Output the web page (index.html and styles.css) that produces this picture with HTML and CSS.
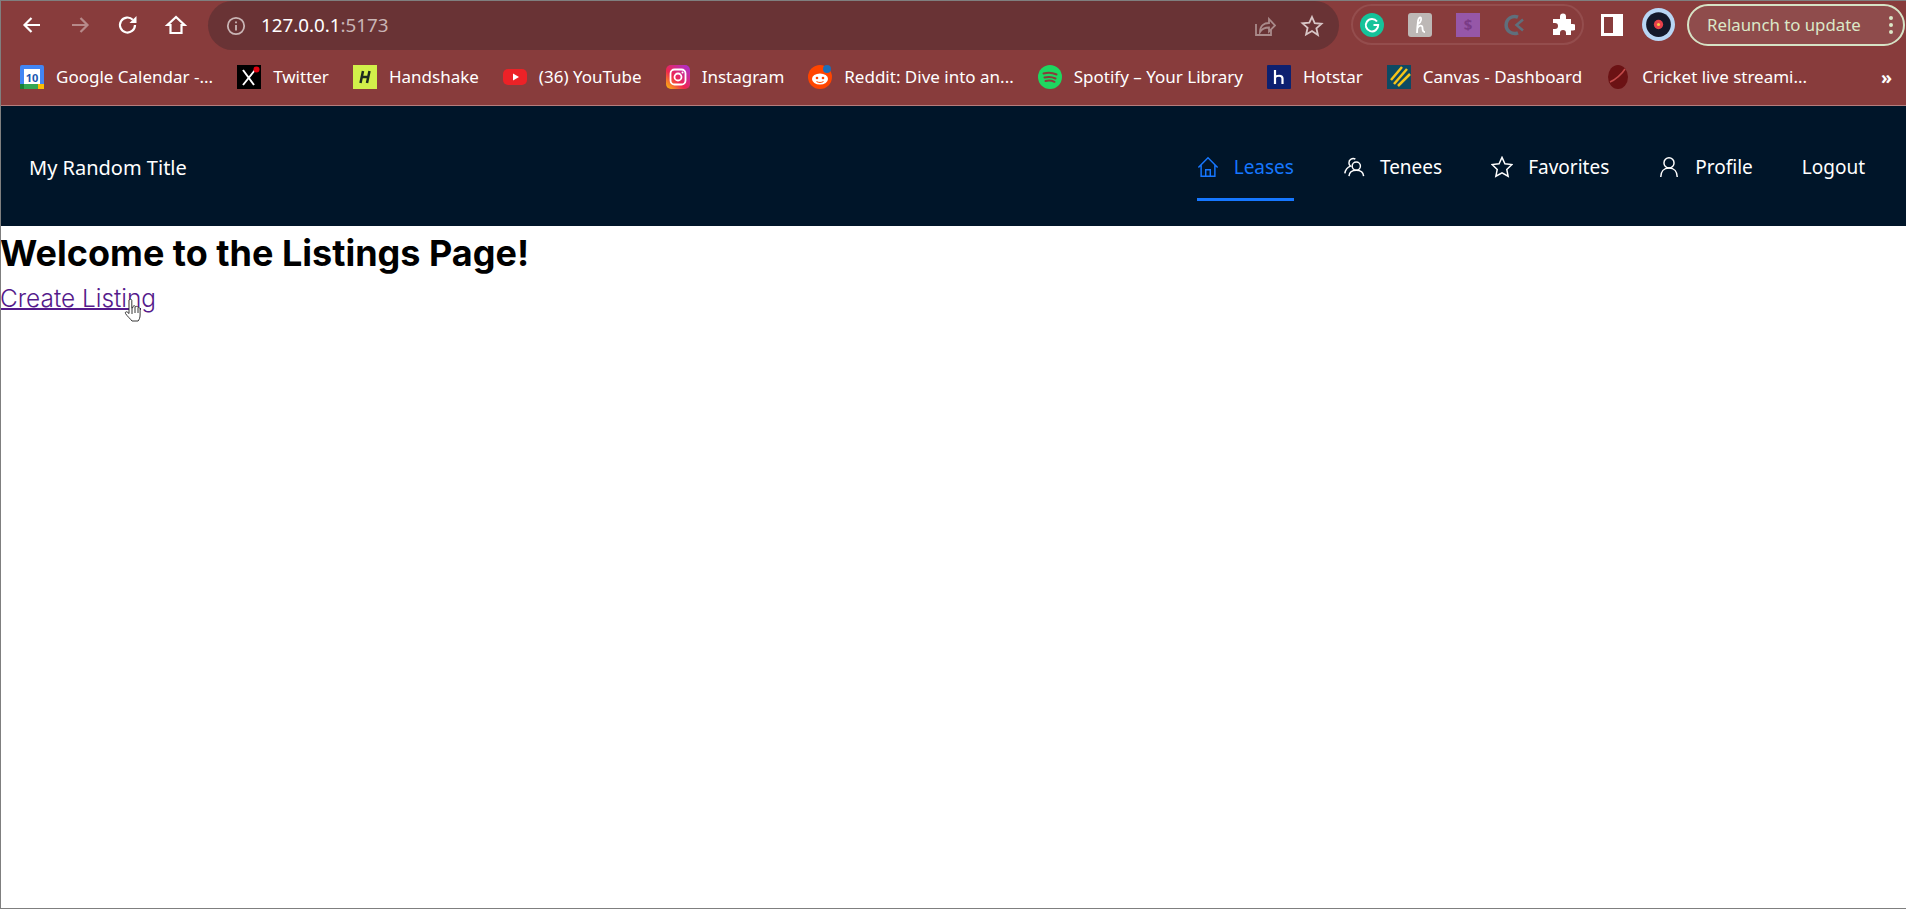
FILE: index.html
```html
<!DOCTYPE html>
<html lang="en">
<head>
  <meta charset="UTF-8" />
  <title>My Random Title</title>
  <link rel="stylesheet" href="styles.css">
</head>
<body>
  <div class="browser">
    <div class="toolbar">
      <div class="nav-buttons">
        <svg class="tool-icon" viewBox="0 0 24 24"><path d="M20 12H5M11.500 5L4.500 12l7 7"/></svg>
        <svg class="tool-icon dim" viewBox="0 0 24 24"><path d="M4 12h15M12.500 5l7 7-7 7"/></svg>
        <svg class="tool-icon" viewBox="0 0 24 24"><path d="M19 12a7.500 7.500 0 1 1-2.200-5.300"/><path class="solid" d="M20.500 3v7h-7z"/></svg>
        <svg class="tool-icon" viewBox="0 0 24 24"><path d="M12 4L3.500 12H6.500v8h11v-8h3z"/></svg>
      </div>
      <div class="omnibox">
        <svg class="info-icon" viewBox="0 0 20 20"><circle cx="10" cy="10" r="8.200"/><path d="M10 9v5.500M10 5.500v1.800"/></svg>
        <span class="url">127.0.0.1<span class="port">:5173</span></span>
        <svg class="omni-icon share" viewBox="0 0 24 24"><path d="M4 10v11h15v-5"/><path d="M8 18c0-6 4-9 9-9V5l6 6.500-6 6v-4c-4 0-7 1-9 4.500z"/></svg>
        <svg class="omni-icon" viewBox="0 0 24 24"><path d="M12 3l2.700 6.200 6.800.6-5.100 4.500 1.500 6.700L12 17l-5.900 3.500 1.500-6.700-5.100-4.500 6.800-.6z"/></svg>
      </div>
      <div class="extensions">
        <svg class="ext" viewBox="0 0 24 24"><circle cx="12" cy="12" r="12" fill="#15c39a"/><path d="M17 8.500A6.200 6.200 0 1 0 18.200 12H13.500" fill="none" stroke="#fff" stroke-width="2"/></svg>
        <svg class="ext" viewBox="0 0 24 24"><rect width="24" height="24" rx="3" fill="#bdb8b6"/><path d="M9 11c2 0 5-3 4-6-1-1.500-2.500 0-3 3-.4 3-.8 7-1 12M9.500 15c1.500-3 5-3.500 5 0 0 2 .5 4 2.500 4" fill="none" stroke="#fff" stroke-width="1.800"/></svg>
        <svg class="ext" viewBox="0 0 24 24"><rect width="24" height="24" fill="#9657a8"/><text x="12" y="17" class="ext-dollar">$</text></svg>
        <svg class="ext" viewBox="0 0 24 24"><path d="M15 4.200A8.500 8.500 0 1 0 15 19.800" fill="none" stroke="#5f6f7c" stroke-width="3.500"/><path d="M20 6.500L13.500 12l6.500 5.500" fill="none" stroke="#5f6f7c" stroke-width="2.500"/></svg>
        <svg class="ext" viewBox="0 0 24 24"><path fill="#fff" d="M9 3.500a3 3 0 0 1 6 0V6h5v5h2a3.200 3.200 0 0 1 0 6.400h-2V22H15v-2a3 3 0 0 0-6 0v2H2v-6h2a3 3 0 0 0 0-6H2V6h7z"/></svg>
      </div>
      <div class="side-panel"><span></span></div>
      <svg class="avatar" viewBox="0 0 32 32"><circle cx="16" cy="16" r="16" fill="#b9d6f5"/><circle cx="16" cy="16" r="12" fill="#14182a"/><circle cx="16" cy="16" r="4.500" fill="#e6404a"/><circle cx="16" cy="16" r="1.500" fill="#f5c84a"/></svg>
      <div class="relaunch">Relaunch to update<span class="dots"><i></i><i></i><i></i></span></div>
    </div>

    <div class="bookmarks">
      <div class="bookmark">
        <svg class="favicon" viewBox="0 0 24 24"><rect width="24" height="24" rx="2" fill="#4285f4"/><rect x="4" y="4" width="16" height="15" fill="#fff"/><rect y="19" width="18" height="5" fill="#34a853"/><rect x="18" y="19" width="6" height="5" fill="#fbbc04"/><rect y="19" width="4" height="5" fill="#188038"/><text x="12" y="16.500" class="fav-cal">10</text></svg>
        <span>Google Calendar -...</span>
      </div>
      <div class="bookmark">
        <svg class="favicon" viewBox="0 0 24 24"><rect width="24" height="24" fill="#000"/><path d="M6 5l11 15M18 5L6 20" stroke="#fff" stroke-width="2" fill="none"/><circle cx="19.500" cy="4.500" r="3" fill="#e3000f"/></svg>
        <span>Twitter</span>
      </div>
      <div class="bookmark">
        <svg class="favicon" viewBox="0 0 24 24"><rect width="24" height="24" fill="#d2f04a"/><path d="M10 6l-2.500 12M16.500 6L14 18M8.500 12h6.500" stroke="#1c2b20" stroke-width="2.500" fill="none"/></svg>
        <span>Handshake</span>
      </div>
      <div class="bookmark">
        <svg class="favicon" viewBox="0 0 24 24"><rect y="4" width="24" height="16" rx="5" fill="#ec2227"/><path d="M10 8.500l6 3.500-6 3.500z" fill="#fff"/></svg>
        <span>(36) YouTube</span>
      </div>
      <div class="bookmark">
        <svg class="favicon" viewBox="0 0 24 24"><defs><linearGradient id="ig" x1="0" y1="1" x2="1" y2="0"><stop offset="0" stop-color="#fdc30a"/><stop offset=".4" stop-color="#f0264e"/><stop offset="1" stop-color="#a82fd8"/></linearGradient></defs><rect width="24" height="24" rx="5" fill="url(#ig)"/><rect x="4.500" y="4.500" width="15" height="15" rx="4" fill="none" stroke="#fff" stroke-width="1.800"/><circle cx="12" cy="12" r="3.500" fill="none" stroke="#fff" stroke-width="1.800"/><circle cx="16.500" cy="7.500" r="1" fill="#fff"/></svg>
        <span>Instagram</span>
      </div>
      <div class="bookmark">
        <svg class="favicon" viewBox="0 0 24 24"><circle cx="12" cy="12" r="12" fill="#ff4500"/><ellipse cx="12" cy="14" rx="8" ry="5.500" fill="#fff"/><circle cx="9" cy="13" r="1.300" fill="#ff4500"/><circle cx="15" cy="13" r="1.300" fill="#ff4500"/><path d="M8.500 16.500c2 1.300 5 1.300 7 0" stroke="#ff4500" fill="none"/><circle cx="19" cy="4" r="4" fill="#1d6fb8"/></svg>
        <span>Reddit: Dive into an...</span>
      </div>
      <div class="bookmark">
        <svg class="favicon" viewBox="0 0 24 24"><circle cx="12" cy="12" r="12" fill="#1ed760"/><path d="M5.500 8.500c4.500-1.300 9-1 13 1M6.500 12.500c3.800-1 7.500-.8 11 1M7.500 16c3-.8 6-.6 9 .8" stroke="#883c3c" stroke-width="2" stroke-linecap="round" fill="none"/></svg>
        <span>Spotify – Your Library</span>
      </div>
      <div class="bookmark">
        <svg class="favicon" viewBox="0 0 24 24"><rect width="24" height="24" rx="1" fill="#0d2070"/><path d="M8 5v14M8 12.500c1-2 7.500-3 7.500 1V19" stroke="#fff" stroke-width="2.200" fill="none"/></svg>
        <span>Hotstar</span>
      </div>
      <div class="bookmark">
        <svg class="favicon" viewBox="0 0 24 24"><rect width="24" height="24" fill="#0d4a63"/><path d="M4 15L15 2M7 19L20 4M11 21L23 9" stroke="#f5c518" stroke-width="2.500" fill="none"/></svg>
        <span>Canvas - Dashboard</span>
      </div>
      <div class="bookmark">
        <svg class="favicon" viewBox="0 0 24 24"><ellipse cx="12" cy="12" rx="10" ry="12" fill="#6b1214"/><path d="M4 17C9 15 16 9 19 4" stroke="#c24a4a" stroke-width="1.500" fill="none"/></svg>
        <span>Cricket live streami...</span>
      </div>
      <span class="more">»</span>
    </div>
  </div>

  <nav class="navbar">
    <div class="brand">My Random Title</div>
    <ul class="menu">
      <li class="menu-item active">
        <svg viewBox="0 0 24 24"><path d="M1.500 12.500L12 2l10.500 10.500M4.500 10v12h15V10M9.500 22v-7h5v7"/></svg>
        Leases
      </li>
      <li class="menu-item">
        <svg viewBox="0 0 24 24"><circle cx="14.500" cy="11" r="4.500"/><path d="M6.500 22c.3-4 3.500-6.500 8-6.500s7.700 2.500 8 6.500"/><path d="M13.500 3.500A4.500 4.500 0 0 0 6.500 7.500c0 1.500.6 2.800 1.700 3.600C4.500 12.500 2.500 15.500 2 19"/></svg>
        Tenees
      </li>
      <li class="menu-item">
        <svg viewBox="0 0 24 24"><path d="M12 1.500l3.200 7 7.600.9-5.600 5.200 1.500 7.500L12 18.300l-6.700 3.800 1.500-7.500-5.600-5.200 7.600-.9z"/></svg>
        Favorites
      </li>
      <li class="menu-item">
        <svg viewBox="0 0 24 24"><circle cx="12" cy="7.500" r="5.500"/><path d="M3 23c0-6 3.500-10 9-10s9 4 9 10"/></svg>
        Profile
      </li>
      <li class="menu-item">Logout</li>
    </ul>
  </nav>

  <main class="content">
    <h1>Welcome to the Listings Page!</h1>
    <div class="create-row">
      <a class="create-link" href="#">Create Listing</a>
      <svg class="hand-cursor" viewBox="0 0 18 26"><path d="M5 2c1-1.200 2.500-1 2.800.4V10l1.200-.6v-1c1-1 2.200-.8 2.600.4 1-.8 2.200-.4 2.500.8 1-.4 2 .2 2 1.400v6c0 3-1 4.500-2 6H8c-1.500-2-5-5-6.500-7.500-.6-1.200.5-2.200 1.700-1.500L5 15.500z"/><path d="M8 10v6M11 9v6M14 10v5"/></svg>
    </div>
  </main>
</body>
</html>
```

FILE: styles.css
```css
* {
  box-sizing: border-box;
}
html, body {
  margin: 0;
  padding: 0;
}
body {
  height: 909px;
  overflow: hidden;
  background: #fff;
  border-left: 1px solid #7f7f7f;
  border-top: 1px solid #7f7f7f;
  border-bottom: 1px solid #7f7f7f;
  font-family: "Noto Sans", sans-serif;
}

/* browser chrome */
.browser {
  background: #883c3c;
  color: #fff;
  height: 105px;
  border-bottom: 1px solid #b57d7d;
}
.toolbar {
  display: flex;
  align-items: center;
  height: 49px;
  padding-bottom: 2px;
}
.nav-buttons {
  display: flex;
  align-items: center;
  gap: 24px;
  padding-left: 19px;
  width: 207px;
}
.tool-icon {
  width: 24px;
  height: 24px;
  fill: none;
  stroke: #fff;
  stroke-width: 2.200;
}
.tool-icon.dim {
  opacity: .4;
}
.tool-icon .solid {
  fill: #fff;
  stroke: none;
}
.omnibox {
  display: flex;
  align-items: center;
  align-self: flex-start;
  width: 1131px;
  height: 49px;
  background: #693335;
  border-radius: 25px;
  padding: 0 15px 0 18px;
}
.info-icon {
  width: 20px;
  height: 20px;
  fill: none;
  stroke: #c9b5b5;
  stroke-width: 1.800;
}
.url {
  flex: 1;
  margin-left: 15px;
  margin-bottom: 2px;
  font-size: 18.800px;
}
.port {
  color: #c9b5b5;
}
.omni-icon {
  width: 24px;
  height: 24px;
  margin-left: 24px;
  fill: none;
  stroke: #d8c6c6;
  stroke-width: 1.800;
}
.omni-icon.share {
  stroke: #a98a8a;
}
.extensions {
  display: flex;
  align-items: center;
  justify-content: space-between;
  width: 233px;
  height: 41px;
  margin-left: 12px;
  padding: 0 7px;
  border: 2px solid #944d4d;
  border-radius: 21px;
}
.ext {
  width: 24px;
  height: 24px;
}
.ext-dollar {
  font-size: 15px;
  font-weight: 700;
  fill: #7a3b86;
  text-anchor: middle;
}
.side-panel {
  width: 22px;
  height: 22px;
  margin-left: 17px;
  background: #fff;
  padding: 3px 10px 3px 3px;
}
.side-panel span {
  display: block;
  height: 100%;
  background: #883c3c;
}
.avatar {
  width: 33px;
  height: 33px;
  margin-left: 19px;
}
.relaunch {
  display: flex;
  align-items: center;
  justify-content: space-between;
  width: 218px;
  height: 42px;
  margin-left: 12px;
  padding: 0 10px 0 18px;
  border: 2px solid #d6e3c6;
  border-radius: 21px;
  background: #8f4c4c;
  color: #dbe8c8;
  font-size: 16.800px;
}
.dots {
  display: flex;
  flex-direction: column;
  gap: 3px;
}
.dots i {
  display: block;
  width: 4px;
  height: 4px;
  border-radius: 50%;
  background: #dbe8c8;
}
.bookmarks {
  display: flex;
  align-items: center;
  gap: 24px;
  height: 55px;
  padding-left: 19px;
  padding-bottom: 2px;
}
.bookmark {
  display: flex;
  align-items: center;
  gap: 12px;
  font-size: 17px;
  white-space: nowrap;
}
.favicon {
  width: 24px;
  height: 24px;
  flex-shrink: 0;
}
.fav-cal {
  font-size: 11px;
  font-weight: 700;
  fill: #1a56b0;
  text-anchor: middle;
}
.more {
  margin-left: auto;
  margin-right: 14px;
  font-size: 18px;
  font-weight: 700;
}

/* app navbar */
.navbar {
  display: flex;
  align-items: center;
  justify-content: space-between;
  height: 120px;
  background: #001529;
  color: #fff;
  padding: 0 41px 0 28px;
  font-size: 19px;
}
.brand {
  margin-top: 2px;
  font-size: 20px;
}
.menu {
  display: flex;
  align-items: stretch;
  gap: 49px;
  height: 120px;
  margin: 0;
  padding: 0;
  list-style: none;
}
.menu-item {
  display: flex;
  align-items: center;
  gap: 15px;
  height: 95px;
  border-bottom: 3px solid transparent;
  padding-top: 30px;
}
.menu-item svg {
  width: 22px;
  height: 22px;
  fill: none;
  stroke: currentColor;
  stroke-width: 1.600;
}
.menu-item.active {
  color: #1677ff;
  border-bottom-color: #1677ff;
}

/* page content */
.content {
  margin-left: -1px;
  color: #000;
  font-family: Inter, sans-serif;
}
h1 {
  margin: 0;
  font-size: 36px;
  font-weight: 700;
  line-height: 54px;
}
.create-row {
  position: relative;
  height: 36px;
}
.create-link {
  font-size: 24.400px;
  font-weight: 300;
  line-height: 36px;
  color: #551a8b;
  text-decoration-thickness: 2px;
}
.hand-cursor {
  position: absolute;
  left: 124px;
  top: 18px;
  width: 18px;
  height: 26px;
  fill: #fff;
  stroke: #222;
  stroke-width: .9;
}
```
